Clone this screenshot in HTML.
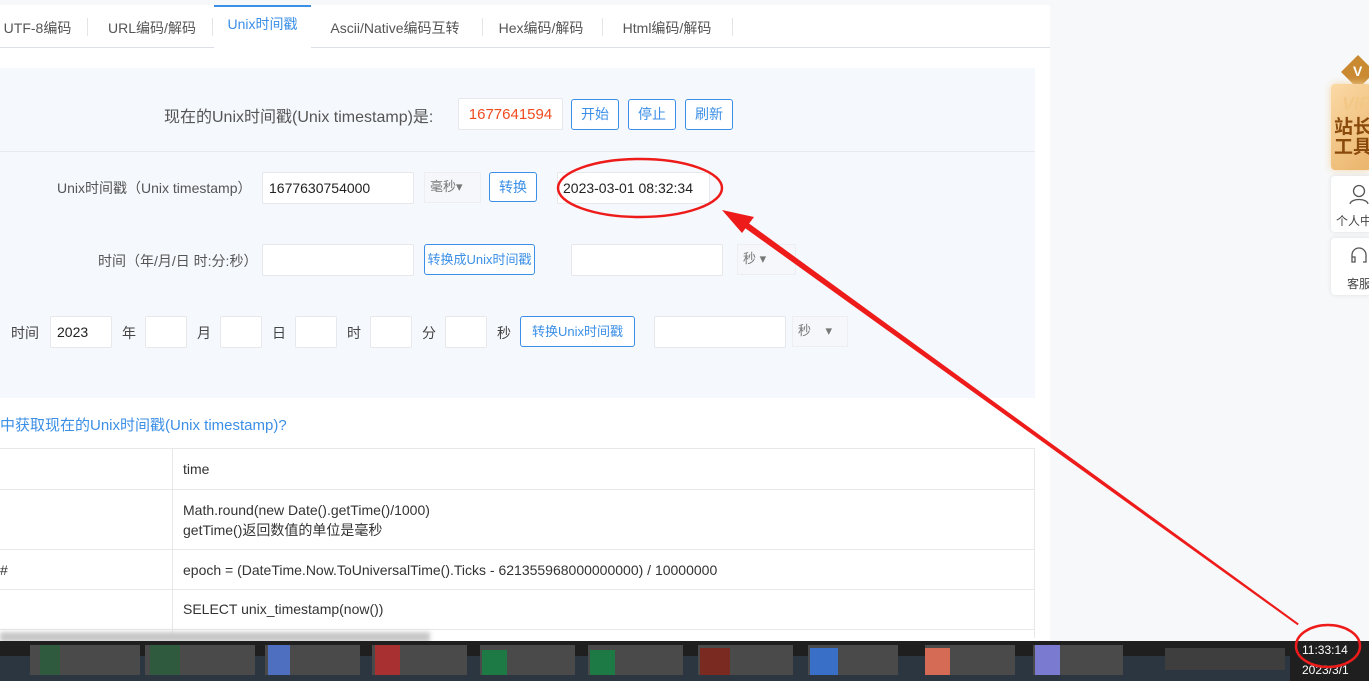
<!DOCTYPE html>
<html><head><meta charset="utf-8"><style>
*{box-sizing:border-box;margin:0;padding:0}
body{width:1369px;height:681px;overflow:hidden;background:#f7f8fa;font-family:"Liberation Sans","Noto Sans CJK SC",sans-serif;font-size:14px;color:#333;position:relative}
.abs{position:absolute}
.card{left:0;top:5px;width:1050px;height:640px;background:#fff}
.tab{position:absolute;top:5px;height:42px;line-height:46px;font-size:14px;color:#555;text-align:center}
.sep{position:absolute;top:18px;width:1px;height:18px;background:#e5e5e5}
.inp{position:absolute;background:#fff;border:1px solid #e6e8eb;border-radius:2px;height:32px;line-height:30px;padding-left:6px;font-size:14px;color:#222}
.btn{position:absolute;border:1px solid #3b8fe6;border-radius:3px;color:#3b8fe6;background:#fff;text-align:center;font-size:14px}
.sel{position:absolute;background:#f5f7fa;border:1px solid #eceef1;height:30px;line-height:28px;padding-left:5px;color:#777;font-size:13px}
.lbl{position:absolute;font-size:14px;color:#444}
.row{position:absolute;left:0;width:1035px;border-bottom:1px solid #e8e8e8;font-size:14px;color:#333}
.row .c{position:absolute;left:183px}
</style></head><body>
<div class="abs card"></div>
<div class="abs" style="left:0;top:47px;width:1050px;height:1px;background:#dcdfe6"></div>
<div class="tab" style="left:0;width:75px">UTF-8编码</div><div class="sep" style="left:87px"></div>
<div class="tab" style="left:100px;width:104px">URL编码/解码</div><div class="sep" style="left:212px"></div>
<div class="abs" style="left:214px;top:5px;width:97px;height:43px;background:#fff;border-top:2px solid #3b8fe6"></div>
<div class="tab" style="left:214px;width:97px;color:#3b8fe6;line-height:38px">Unix时间戳</div>
<div class="tab" style="left:320px;width:150px">Ascii/Native编码互转</div><div class="sep" style="left:482px"></div>
<div class="tab" style="left:488px;width:106px">Hex编码/解码</div><div class="sep" style="left:602px"></div>
<div class="tab" style="left:612px;width:110px">Html编码/解码</div><div class="sep" style="left:732px"></div>

<div class="abs" style="left:0;top:68px;width:1035px;height:330px;background:#f5f8fc"></div>
<div class="abs" style="left:0;top:151px;width:1035px;height:1px;background:#e6eaf0"></div>
<div class="lbl" style="left:164px;top:103px;font-size:16px;color:#555">现在的Unix时间戳(Unix timestamp)是:</div>
<div class="inp" style="left:458px;top:98px;width:105px;height:32px;color:#f04b1f;text-align:center;padding:0;line-height:32px;font-size:15px">1677641594</div>
<div class="btn" style="left:571px;top:99px;width:48px;height:31px;line-height:29px">开始</div>
<div class="btn" style="left:628px;top:99px;width:48px;height:31px;line-height:29px">停止</div>
<div class="btn" style="left:685px;top:99px;width:48px;height:31px;line-height:29px">刷新</div>

<div class="lbl" style="left:57px;top:178px;color:#555">Unix时间戳（Unix timestamp）</div>
<div class="inp" style="left:262px;top:172px;width:152px">1677630754000</div>
<div class="sel" style="left:424px;top:172px;width:57px;height:31px">毫秒▾</div>
<div class="btn" style="left:489px;top:172px;width:48px;height:30px;line-height:28px">转换</div>
<div class="inp" style="left:557px;top:172px;width:153px;padding-left:5px">2023-03-01 08:32:34</div>

<div class="lbl" style="left:98px;top:251px;color:#555">时间（年/月/日 时:分:秒）</div>
<div class="inp" style="left:262px;top:244px;width:152px"></div>
<div class="btn" style="left:424px;top:244px;width:111px;height:31px;line-height:29px;font-size:13px">转换成Unix时间戳</div>
<div class="inp" style="left:571px;top:244px;width:152px"></div>
<div class="sel" style="left:737px;top:244px;width:59px;height:31px">秒 ▾</div>

<div class="lbl" style="left:11px;top:323px">时间</div>
<div class="inp" style="left:50px;top:316px;width:62px">2023</div>
<div class="lbl" style="left:122px;top:323px">年</div>
<div class="inp" style="left:145px;top:316px;width:42px"></div>
<div class="lbl" style="left:197px;top:323px">月</div>
<div class="inp" style="left:220px;top:316px;width:42px"></div>
<div class="lbl" style="left:272px;top:323px">日</div>
<div class="inp" style="left:295px;top:316px;width:42px"></div>
<div class="lbl" style="left:347px;top:323px">时</div>
<div class="inp" style="left:370px;top:316px;width:42px"></div>
<div class="lbl" style="left:422px;top:323px">分</div>
<div class="inp" style="left:445px;top:316px;width:42px"></div>
<div class="lbl" style="left:497px;top:323px">秒</div>
<div class="btn" style="left:520px;top:316px;width:115px;height:31px;line-height:29px;font-size:13px">转换Unix时间戳</div>
<div class="inp" style="left:654px;top:316px;width:132px"></div>
<div class="sel" style="left:792px;top:316px;width:56px;height:31px">秒 &nbsp; &nbsp;▾</div>

<div class="lbl" style="left:0;top:414px;color:#3b8fe6;font-size:15px">中获取现在的Unix时间戳(Unix timestamp)?</div>
<div class="abs" style="left:0;top:448px;width:1035px;height:190px;border-top:1px solid #e8e8e8;border-right:1px solid #e8e8e8"></div>
<div class="abs" style="left:172px;top:448px;width:1px;height:190px;background:#e8e8e8"></div>
<div class="row" style="top:448px;height:42px"><div class="c" style="top:13px">time</div></div>
<div class="row" style="top:490px;height:60px"><div class="c" style="top:10px;line-height:20px">Math.round(new Date().getTime()/1000)<br>getTime()返回数值的单位是毫秒</div></div>
<div class="row" style="top:550px;height:40px"><div class="abs" style="left:0;top:12px">#</div><div class="c" style="top:12px">epoch = (DateTime.Now.ToUniversalTime().Ticks - 621355968000000000) / 10000000</div></div>
<div class="row" style="top:590px;height:40px"><div class="c" style="top:11px">SELECT unix_timestamp(now())</div></div>

<!-- right sidebar -->
<div class="abs" style="left:1346px;top:60px;width:24px;height:24px;background:#c98a32;transform:rotate(45deg)"></div>
<div class="abs" style="left:1353px;top:63px;color:#fff;font-weight:bold;font-size:14px">V</div>
<div class="abs" style="left:1331px;top:84px;width:40px;height:86px;background:linear-gradient(135deg,#fbd9a6,#eab46a);border-radius:4px;box-shadow:0 0 8px #f5d6a4;overflow:hidden">
<div class="abs" style="left:11px;top:10px;color:#f3c886;font-weight:bold;font-size:18px;font-style:italic;white-space:nowrap">VIP</div>
<div class="abs" style="left:3px;top:34px;color:#8a4a0c;font-weight:bold;font-size:19px;line-height:20px;white-space:nowrap">站长<br>工具</div>
</div>
<div class="abs" style="left:1331px;top:176px;width:40px;height:56px;background:#fff;border-radius:4px;box-shadow:0 0 4px #ddd"></div>
<svg class="abs" style="left:1349px;top:184px" width="20" height="22"><circle cx="10" cy="7" r="5.5" fill="none" stroke="#555" stroke-width="1.3"/><path d="M1 20c1-6 17-6 18 0" fill="none" stroke="#555" stroke-width="1.3"/></svg>
<div class="abs" style="left:1336px;top:212px;font-size:12px;color:#444;white-space:nowrap">个人中</div>
<div class="abs" style="left:1331px;top:238px;width:40px;height:57px;background:#fff;border-radius:4px;box-shadow:0 0 4px #ddd"></div>
<svg class="abs" style="left:1349px;top:246px" width="20" height="22"><path d="M3 13V9a7 7 0 0 1 14 0v4M3 11v5h3v-5zM17 11v5h-3" fill="none" stroke="#555" stroke-width="1.3"/></svg>
<div class="abs" style="left:1347px;top:275px;font-size:12px;color:#444;white-space:nowrap">客服</div>

<!-- taskbar -->
<div class="abs" style="left:0;top:632px;width:430px;height:10px;background:#c8c8c8;filter:blur(2px)"></div>
<div class="abs" style="left:0;top:641px;width:1369px;height:40px;background:#1f1f1f"></div>
<div class="abs" style="left:0;top:656px;width:1290px;height:25px;background:#2c3640"></div>
<div class="abs" style="left:30px;top:645px;width:110px;height:30px;background:#4a4a4a"></div>
<div class="abs" style="left:40px;top:645px;width:20px;height:30px;background:#2f5a3e"></div>
<div class="abs" style="left:145px;top:645px;width:110px;height:30px;background:#4a4a4a"></div>
<div class="abs" style="left:150px;top:645px;width:30px;height:30px;background:#2f5a3e"></div>
<div class="abs" style="left:265px;top:645px;width:95px;height:30px;background:#4a4a4a"></div>
<div class="abs" style="left:268px;top:645px;width:22px;height:30px;background:#4e6fc0"></div>
<div class="abs" style="left:372px;top:645px;width:95px;height:30px;background:#4a4a4a"></div>
<div class="abs" style="left:375px;top:645px;width:25px;height:30px;background:#a83030"></div>
<div class="abs" style="left:480px;top:645px;width:95px;height:30px;background:#4a4a4a"></div>
<div class="abs" style="left:482px;top:650px;width:25px;height:25px;background:#1e7a45"></div>
<div class="abs" style="left:588px;top:645px;width:95px;height:30px;background:#4a4a4a"></div>
<div class="abs" style="left:590px;top:650px;width:25px;height:25px;background:#1e7a45"></div>
<div class="abs" style="left:698px;top:645px;width:95px;height:30px;background:#4a4a4a"></div>
<div class="abs" style="left:700px;top:648px;width:30px;height:27px;background:#7a2a20"></div>
<div class="abs" style="left:808px;top:645px;width:90px;height:30px;background:#4a4a4a"></div>
<div class="abs" style="left:810px;top:648px;width:28px;height:27px;background:#3a6fc8"></div>
<div class="abs" style="left:925px;top:645px;width:90px;height:30px;background:#4a4a4a"></div>
<div class="abs" style="left:925px;top:648px;width:25px;height:27px;background:#d56a55"></div>
<div class="abs" style="left:1033px;top:645px;width:90px;height:30px;background:#4a4a4a"></div>
<div class="abs" style="left:1035px;top:645px;width:25px;height:30px;background:#7a7ad0"></div>
<div class="abs" style="left:1165px;top:648px;width:120px;height:22px;background:#3e3e3e"></div>
<div class="abs" style="left:1302px;top:643px;color:#fff;font-size:12px">11:33:14</div>
<div class="abs" style="left:1302px;top:663px;color:#fff;font-size:12px">2023/3/1</div>

<svg class="abs" style="left:0;top:0" width="1369" height="681">
<ellipse cx="640" cy="188" rx="82" ry="29" fill="none" stroke="#ee1b1b" stroke-width="2.5"/>
<ellipse cx="1328" cy="646" rx="32" ry="21" fill="none" stroke="#ee1b1b" stroke-width="2.5"/>
<path d="M1298.8 623.6 L1297.6 625.2 L738 223 L741.5 218 Z" fill="#ee1b1b"/>
<path d="M722 210 L754 217 L742 233 Z" fill="#ee1b1b"/>
</svg>
</body></html>
